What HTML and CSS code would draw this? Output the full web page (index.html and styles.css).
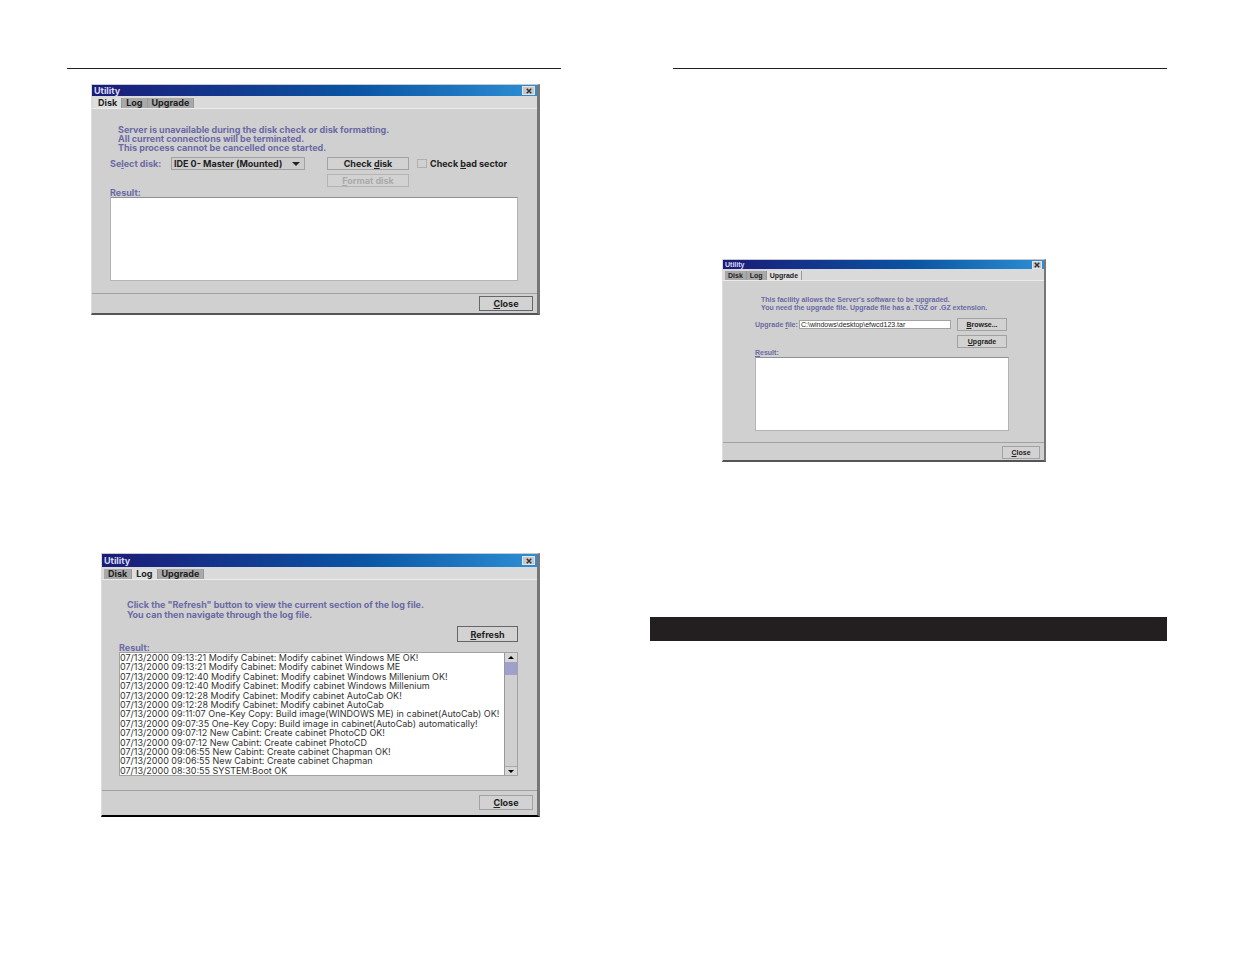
FILE: index.html
```html
<!DOCTYPE html>
<html lang="en">
<head>
    <meta charset="UTF-8">
    <meta name="viewport" content="width=device-width, initial-scale=1.0">
    <title>Utility</title>
    <link rel="stylesheet" href="styles.css">
</head>
<body>
    <main class="spread">
        <section class="page">
            <div class="window disk-window">
                <header class="title-bar">
                    <h2>Utility</h2>
                    <button type="button" class="close-x" aria-label="Close window">
                        <svg viewBox="0 0 8 8"><path d="M1 1 L7 7 M7 1 L1 7"/></svg>
                    </button>
                </header>
                <nav class="tabs">
                    <button type="button" class="tab active">Disk</button>
                    <button type="button" class="tab">Log</button>
                    <button type="button" class="tab">Upgrade</button>
                </nav>
                <div class="panel">
                    <p class="note">Server is unavailable during the disk check or disk formatting.<br>All current connections will be terminated.<br>This process cannot be cancelled once started.</p>
                    <div class="disk-row">
                        <label class="field-label" for="disk">Se<u>l</u>ect disk:</label>
                        <div class="select-wrap">
                            <select id="disk">
                                <option>IDE 0- Master (Mounted)</option>
                            </select>
                            <svg class="arrow" viewBox="0 0 8 4"><path d="M0 0 H8 L4 4 Z"/></svg>
                        </div>
                        <div class="disk-buttons">
                            <button type="button" class="btn">Check <u>d</u>isk</button>
                            <button type="button" class="btn" disabled><u>F</u>ormat disk</button>
                        </div>
                        <div class="check">
                            <input type="checkbox" id="badSector">
                            <label for="badSector">Check <u>b</u>ad sector</label>
                        </div>
                    </div>
                    <label class="field-label result-label" for="diskResult"><u>R</u>esult:</label>
                    <textarea class="result" id="diskResult" readonly></textarea>
                </div>
                <footer class="actions">
                    <button type="button" class="btn focused"><u>C</u>lose</button>
                </footer>
            </div>

            <div class="window log-window">
                <header class="title-bar">
                    <h2>Utility</h2>
                    <button type="button" class="close-x" aria-label="Close window">
                        <svg viewBox="0 0 8 8"><path d="M1 1 L7 7 M7 1 L1 7"/></svg>
                    </button>
                </header>
                <nav class="tabs">
                    <button type="button" class="tab">Disk</button>
                    <button type="button" class="tab active">Log</button>
                    <button type="button" class="tab">Upgrade</button>
                </nav>
                <div class="panel">
                    <p class="note">Click the "Refresh" button to view the current section of the log file.<br>You can then navigate through the log file.</p>
                    <div class="refresh-row">
                        <button type="button" class="btn focused"><u>R</u>efresh</button>
                    </div>
                    <span class="field-label result-label" id="logLabel">Resul<u>t</u>:</span>
                    <div class="log-box">
                        <ul class="log" aria-labelledby="logLabel">
                            <li>07/13/2000 09:13:21 Modify Cabinet: Modify cabinet Windows ME OK!</li>
                            <li>07/13/2000 09:13:21 Modify Cabinet: Modify cabinet Windows ME</li>
                            <li>07/13/2000 09:12:40 Modify Cabinet: Modify cabinet Windows Millenium OK!</li>
                            <li>07/13/2000 09:12:40 Modify Cabinet: Modify cabinet Windows Millenium</li>
                            <li>07/13/2000 09:12:28 Modify Cabinet: Modify cabinet AutoCab OK!</li>
                            <li>07/13/2000 09:12:28 Modify Cabinet: Modify cabinet AutoCab</li>
                            <li>07/13/2000 09:11:07 One-Key Copy: Build image(WINDOWS ME) in cabinet(AutoCab) OK!</li>
                            <li>07/13/2000 09:07:35 One-Key Copy: Build image in cabinet(AutoCab) automatically!</li>
                            <li>07/13/2000 09:07:12 New Cabint: Create cabinet PhotoCD OK!</li>
                            <li>07/13/2000 09:07:12 New Cabint: Create cabinet PhotoCD</li>
                            <li>07/13/2000 09:06:55 New Cabint: Create cabinet Chapman OK!</li>
                            <li>07/13/2000 09:06:55 New Cabint: Create cabinet Chapman</li>
                            <li>07/13/2000 08:30:55 SYSTEM:Boot OK</li>
                        </ul>
                        <div class="scrollbar">
                            <button type="button" class="scroll-btn" aria-label="Scroll up">
                                <svg viewBox="0 0 6 3"><path d="M0 3 H6 L3 0 Z"/></svg>
                            </button>
                            <div class="thumb"></div>
                            <button type="button" class="scroll-btn down" aria-label="Scroll down">
                                <svg viewBox="0 0 6 3"><path d="M0 0 H6 L3 3 Z"/></svg>
                            </button>
                        </div>
                    </div>
                </div>
                <footer class="actions">
                    <button type="button" class="btn"><u>C</u>lose</button>
                </footer>
            </div>
        </section>

        <section class="page">
            <div class="window upgrade-window">
                <header class="title-bar">
                    <h2>Utility</h2>
                    <button type="button" class="close-x" aria-label="Close window">
                        <svg viewBox="0 0 8 8"><path d="M1 1 L7 7 M7 1 L1 7"/></svg>
                    </button>
                </header>
                <nav class="tabs">
                    <button type="button" class="tab">Disk</button>
                    <button type="button" class="tab">Log</button>
                    <button type="button" class="tab active">Upgrade</button>
                </nav>
                <div class="panel">
                    <p class="note">This facility allows the Server's software to be upgraded.<br>You need the upgrade file. Upgrade file has a .TGZ or .GZ extension.</p>
                    <div class="file-row">
                        <label class="field-label" for="upgradeFile">Upgrade <u>f</u>ile:</label>
                        <input type="text" id="upgradeFile" value="C:\windows\desktop\efwcd123.tar">
                        <div class="file-buttons">
                            <button type="button" class="btn"><u>B</u>rowse...</button>
                            <button type="button" class="btn"><u>U</u>pgrade</button>
                        </div>
                    </div>
                    <label class="field-label result-label" for="upgradeResult"><u>R</u>esult:</label>
                    <textarea class="result" id="upgradeResult" readonly></textarea>
                </div>
                <footer class="actions">
                    <button type="button" class="btn"><u>C</u>lose</button>
                </footer>
            </div>
            <div class="section-bar"></div>
        </section>
    </main>
</body>
</html>
```
FILE: styles.css
```css
* {
    box-sizing: border-box;
}

body {
    margin: 0;
    background-color: #ffffff;
    color: #222222;
    font-family: Inter, "Liberation Sans", Arial, sans-serif;
}

button,
input,
select,
textarea {
    font-family: inherit;
    font-size: inherit;
    font-weight: inherit;
    color: inherit;
    margin: 0;
}

/* Two facing pages */
.spread {
    display: grid;
    grid-template-columns: 1fr 1fr;
    column-gap: 112px;
    padding: 68px 68px 68px 67px;
}

.page {
    border-top: 1px solid #231f20;
}

/* Dialog window */
.window {
    display: flex;
    flex-direction: column;
    background-color: #d0d0d0;
    border-style: solid;
    border-width: 1px 3px 2px 1px;
    border-color: #c8c8d0 #77777a #555557 #dcdcdc;
    font-size: 9px;
    font-weight: bold;
    line-height: 9px;
}

.title-bar {
    display: flex;
    justify-content: space-between;
    align-items: center;
    height: 11px;
    padding: 0 2px;
    background: linear-gradient(to right, #1b1b78, #0a55a4 60%, #2c8fd4);
    color: #dcdcf4;
}

.title-bar h2 {
    margin: 0;
    font-size: inherit;
}

.close-x {
    display: flex;
    justify-content: center;
    align-items: center;
    width: 13px;
    height: 9px;
    padding: 0;
    border: 1px solid #e4e4e4;
    background-color: #c8c8c8;
}

.close-x svg {
    width: 6px;
    height: 6px;
    stroke: #333333;
    stroke-width: 2;
}

/* Tabs */
.tabs {
    display: flex;
    align-items: flex-end;
    height: 13px;
    padding-left: 2px;
    background-color: #dadada;
    border-bottom: 1px solid #ececec;
}

.tab {
    height: 10px;
    padding: 0 4px;
    border: 0;
    border-right: 1px solid #999999;
    background-color: #a9a9a9;
    line-height: 10px;
}

.tab.active {
    background-color: #dedede;
}

.panel {
    display: flex;
    flex-direction: column;
}

.note {
    margin: 0;
    color: #6a6aa4;
}

.field-label {
    color: #6a6aa4;
}

/* Buttons */
.btn {
    height: 13px;
    padding: 0;
    border: 1px solid #a2a2a2;
    background-color: #d2d2d2;
    line-height: 11px;
    text-align: center;
}

.btn.focused {
    border-color: #66666a;
}

.btn:disabled {
    color: #aaaaaa;
    border-color: #b4b4b4;
}

.result {
    display: block;
    width: 100%;
    padding: 0;
    border: 1px solid #b4b4b4;
    border-top-color: #909090;
    background-color: #ffffff;
    resize: none;
    outline: none;
}

.actions {
    display: flex;
    justify-content: flex-end;
    border-top: 1px solid #a2a2a2;
    padding: 2px 4px;
}

.actions .btn {
    width: 54px;
    height: 15px;
}

/* Disk window */
.disk-window {
    margin: 15px 21px 0 24px;
}

.disk-window .panel {
    padding: 16px 19px 12px 18px;
}

.disk-window .note {
    padding-left: 8px;
}

.disk-row {
    display: flex;
    align-items: flex-start;
    margin-top: 5px;
    line-height: 13px;
}

.disk-row > .field-label {
    width: 61px;
}

.select-wrap {
    display: flex;
    position: relative;
    width: 134px;
}

.select-wrap select {
    appearance: none;
    width: 100%;
    height: 13px;
    padding: 0 2px;
    border: 1px solid #a2a2a2;
    background-color: #cccccc;
    line-height: 11px;
}

/* Drop-down arrow drawn over the select */
.arrow {
    position: absolute;
    top: 5px;
    right: 5px;
    width: 8px;
    height: 4px;
    fill: #222222;
    pointer-events: none;
}

.disk-buttons {
    display: flex;
    flex-direction: column;
    gap: 4px;
    width: 82px;
    margin-left: 22px;
}

.check {
    display: flex;
    align-items: center;
    gap: 3px;
    margin-left: 8px;
    white-space: nowrap;
}

.check input {
    appearance: none;
    width: 10px;
    height: 9px;
    border: 1px solid #b0b0b0;
}

.disk-window .result-label {
    margin-top: 1px;
}

.disk-window .result {
    height: 84px;
}

/* Log window */
.log-window {
    margin: 238px 21px 0 34px;
    border-bottom-color: #000000;
}

.log-window .title-bar {
    height: 13px;
}

.log-window .panel {
    padding: 20px 19px 14px 17px;
}

.log-window .note {
    padding-left: 8px;
    line-height: 10px;
}

.refresh-row {
    display: flex;
    justify-content: flex-end;
    margin-top: 6px;
}

.refresh-row .btn {
    width: 61px;
    height: 16px;
}

.log-window .result-label {
    margin-top: 1px;
}

.log-box {
    display: flex;
    height: 124px;
    border: 1px solid #a2a2a2;
    background-color: #ffffff;
}

.log {
    display: flex;
    flex: 1;
    flex-direction: column;
    margin: 0;
    padding: 0;
    list-style: none;
    color: #333333;
    font-weight: normal;
    white-space: nowrap;
}

.log li {
    flex: 1;
}

.scrollbar {
    display: flex;
    flex-direction: column;
    width: 13px;
    border-left: 1px solid #999999;
    background-color: #cfcfcf;
}

.scroll-btn {
    display: flex;
    justify-content: center;
    align-items: center;
    height: 9px;
    padding: 0;
    border: 0;
    background-color: #d6d6d6;
}

.scroll-btn.down {
    margin-top: auto;
    border-top: 1px solid #aaaaaa;
}

.scroll-btn svg {
    width: 6px;
    height: 3px;
    fill: #000000;
}

.thumb {
    height: 13px;
    background-color: #a0a0cc;
}

.log-window .actions {
    padding: 4px 4px 5px;
}

/* Upgrade window */
.upgrade-window {
    margin: 190px 121px 0 49px;
    border-right-width: 2px;
    font-family: "Liberation Sans", Arial, sans-serif;
    font-size: 7px;
    line-height: 8px;
}

.upgrade-window .title-bar {
    height: 9px;
}

.upgrade-window .close-x {
    width: 10px;
    height: 8px;
}

.upgrade-window .tabs {
    height: 12px;
}

.upgrade-window .tab {
    height: 9px;
    padding: 0 3px;
    line-height: 9px;
}

.upgrade-window .panel {
    padding: 15px 35px 11px 32px;
}

.upgrade-window .note {
    padding-left: 6px;
}

.file-row {
    display: flex;
    align-items: flex-start;
    margin-top: 6px;
    line-height: 13px;
}

.file-row .field-label {
    width: 44px;
    white-space: nowrap;
}

.file-row input {
    flex: 1;
    min-width: 0;
    height: 9px;
    margin-top: 2px;
    padding: 0 1px;
    border: 1px solid #a2a2a2;
    background-color: #ffffff;
    font-weight: normal;
}

.file-buttons {
    display: flex;
    flex-direction: column;
    gap: 4px;
    width: 50px;
    margin: 0 2px 0 6px;
}

.upgrade-window .result-label {
    margin-top: 1px;
}

.upgrade-window .result {
    height: 74px;
}

.upgrade-window .actions {
    padding: 3px 4px 1px;
}

.upgrade-window .actions .btn {
    width: 38px;
    height: 13px;
}

/* Heading band, runs past the page's left edge */
.section-bar {
    height: 24px;
    margin: 155px 0 0 -23px;
    background-color: #231f20;
}
```
